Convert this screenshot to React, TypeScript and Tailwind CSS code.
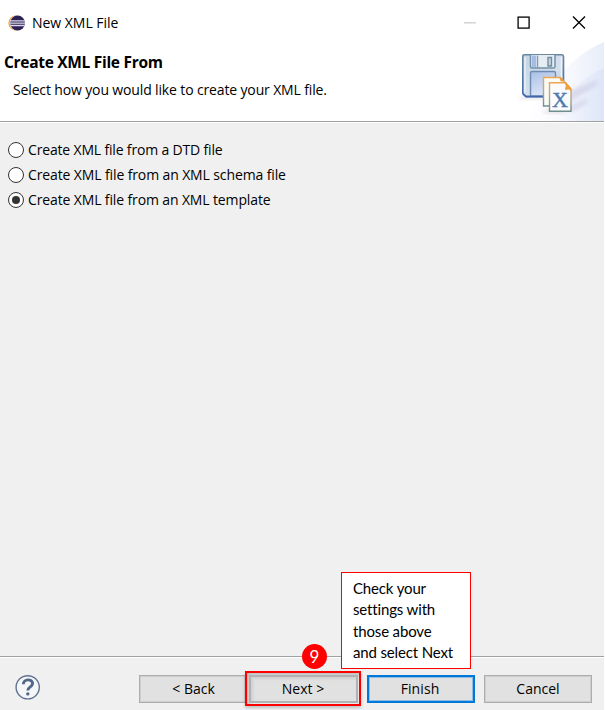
import React from "react";

const UI = "font-['Open_Sans','Noto_Sans',sans-serif]";

function EclipseIcon() {
  return (
    <svg width="18" height="18" viewBox="0 0 18 18" className="block">
      <circle cx="8" cy="9" r="7.6" fill="#f0952a" />
      <circle cx="8.9" cy="9" r="7.5" fill="#fbe3c4" />
      <circle cx="9.6" cy="9" r="7.4" fill="#2c2255" />
      <path d="M2.4 6.9H16.8M2 9.2H17M2.4 11.5H16.8" stroke="#dcdaea" strokeWidth="1.3" />
    </svg>
  );
}

function WizardBanner() {
  return (
    <svg width="104" height="81" viewBox="500 40 104 81" className="block">
      <defs>
        <linearGradient id="swoosh" x1="0" x2="1" y1="0" y2="0">
          <stop offset="0" stopColor="#fff" />
          <stop offset="0.5" stopColor="#fafbfe" />
          <stop offset="1" stopColor="#e8edf9" />
        </linearGradient>
        <linearGradient id="swooshLow" x1="0" x2="1" y1="0" y2="0">
          <stop offset="0" stopColor="#fff" stopOpacity="0" />
          <stop offset="1" stopColor="#dde5f8" />
        </linearGradient>
        <linearGradient id="disk" x1="0" x2="1" y1="0" y2="1">
          <stop offset="0" stopColor="#c5d3e2" />
          <stop offset="0.6" stopColor="#d5e0ee" />
          <stop offset="1" stopColor="#a9bedb" />
        </linearGradient>
        <linearGradient id="label" x1="0" x2="0.4" y1="0" y2="1">
          <stop offset="0" stopColor="#a9bfe6" />
          <stop offset="1" stopColor="#dce6f8" />
        </linearGradient>
        <linearGradient id="edge" x1="0" x2="0" y1="0" y2="1">
          <stop offset="0" stopColor="#6b8aa0" />
          <stop offset="1" stopColor="#4468a8" />
        </linearGradient>
        <linearGradient id="page" x1="0" x2="0" y1="0" y2="1">
          <stop offset="0" stopColor="#f0a44c" />
          <stop offset="0.5" stopColor="#b3a98c" />
          <stop offset="1" stopColor="#6e8d8d" />
        </linearGradient>
        <filter id="soft" x="-30%" y="-60%" width="160%" height="220%">
          <feGaussianBlur stdDeviation="2" />
        </filter>
      </defs>
      <path d="M520 121C545 105 559 60 604 42V121Z" fill="url(#swoosh)" />
      <path d="M530 121C560 119 570 81 604 68V121Z" fill="url(#swooshLow)" />
      <path d="M563 93L596 81L598 84L568 103Z" fill="#b9b4d4" opacity="0.4" filter="url(#soft)" />
      <path d="M568 107L586 99L588 102L572 112Z" fill="#b9b4d4" opacity="0.4" filter="url(#soft)" />
      <path d="M520 96.5H545V99H520Z" fill="#b5a5b5" opacity="0.4" filter="url(#soft)" />
      <path d="M545 110H566V113H543Z" fill="#b5a5b5" opacity="0.4" filter="url(#soft)" />
      <path d="M524 54.8H562Q563.5 54.8 563.5 56.5V96.5H526L522.8 93.5V56Q522.8 54.8 524 54.8Z" fill="url(#disk)" stroke="url(#edge)" strokeWidth="1.6" />
      <path d="M525 57V92M561.3 57V94" stroke="#f0f5fa" strokeWidth="1.2" />
      <path d="M530.5 55V66.5Q530.5 68 532 68H553.5Q555 68 555 66.5V55" fill="#e5edf3" stroke="#7391a7" strokeWidth="1.5" />
      <path d="M532 55.5H536V67H532Z" fill="#a5bce4" />
      <path d="M537.5 55.5V67.5" stroke="#7d9ab2" strokeWidth="1.4" />
      <path d="M548 57.5H551.5V66H548Z" fill="#c8d4e0" stroke="#6f8da3" strokeWidth="1.4" />
      <path d="M530.5 96V73Q530.5 71.5 532 71.5H554Q555.5 71.5 555.5 73V96Z" fill="url(#label)" stroke="#6c8db1" strokeWidth="1.4" />
      <path d="M523 94L526 96.6H544" fill="none" stroke="#3d66ad" strokeWidth="1.6" />
      <path d="M543.5 77.5H560L566 83V106H543.5Z" fill="#fafbf7" stroke="url(#page)" strokeWidth="1.4" />
      <path d="M549.5 82.7H565L571 89V111.3H549.5Z" fill="#f9fbff" stroke="url(#page)" strokeWidth="1.4" />
      <path d="M560 77.5L563.5 81H561ZM565 82.5C567 85 566 87 565.5 89.5C568 88.5 570 89 571.5 90.5C570 87 568 84 565 82.5Z" fill="#f6a23a" stroke="#ee9b38" />
      <text x="552" y="106.8" fontFamily="Liberation Serif" fontSize="21" fill="#4e79ad" stroke="#4e79ad" strokeWidth="0.4" textLength="16" lengthAdjust="spacingAndGlyphs">X</text>
    </svg>
  );
}

function Radio({ label, checked, track }: { label: string; checked?: boolean; track: string }) {
  return (
    <label className="flex h-[25px] items-center">
      <span className="flex size-4 items-center justify-center rounded-full border border-[#333] bg-white">
        {checked && <span className="size-2 rounded-full bg-[#333]" />}
      </span>
      <span className={`ml-1 whitespace-nowrap ${track}`}>{label}</span>
    </label>
  );
}

function Button({ label, className }: { label: string; className: string }) {
  return (
    <button className={`flex h-7 items-center justify-center whitespace-nowrap bg-[#e1e1e1] ${className}`}>
      {label}
    </button>
  );
}

export default function App() {
  return (
    <div className={`relative flex h-[710px] w-[605px] flex-col overflow-hidden border-r border-white bg-[#f0f0f0] text-[14px] leading-5 text-black ${UI}`}>
      <div className="flex h-[121px] shrink-0 justify-between bg-white">
        <div className="flex flex-col">
          <div className="flex h-[46px] items-center pl-2">
            <EclipseIcon />
            <span className="ml-[6px] whitespace-nowrap tracking-[-0.03px]">New XML File</span>
          </div>
          <h1 className="mt-[6px] pl-1 text-[15.5px] font-bold leading-5 tracking-[-0.3px] whitespace-nowrap">Create XML File From</h1>
          <p className="mt-2 pl-[13px] tracking-[-0.14px] whitespace-nowrap">Select how you would like to create your XML file.</p>
        </div>
        <div className="flex w-[141px] flex-col items-end">
          <svg width="141" height="40" viewBox="463 0 141 40" className="block" fill="none">
            <path d="M464 22.8H476" stroke="#d0d0d0" strokeWidth="1.4" />
            <rect x="518.1" y="17.1" width="11" height="11" stroke="#000" strokeWidth="1.3" />
            <path d="M573 16.5L585 28.5M585 16.5L573 28.5" stroke="#000" strokeWidth="1.3" />
          </svg>
          <WizardBanner />
        </div>
      </div>
      <div className="h-[2px] shrink-0 border-t border-[#a0a0a0] bg-white" />

      <div className="flex flex-1 flex-col pl-2 pt-[14px]">
        <Radio label="Create XML file from a DTD file" track="tracking-[-0.17px]" />
        <Radio label="Create XML file from an XML schema file" track="tracking-[-0.12px]" />
        <Radio label="Create XML file from an XML template" track="tracking-[-0.13px]" checked />
      </div>

      <div className="flex h-[54px] shrink-0 items-start border-t border-[#a0a0a0] pl-[15px] pt-[18px] shadow-[inset_0_1px_0_#fff]">
        <svg width="26" height="26" viewBox="0 0 26 26" className="block">
          <circle cx="12.7" cy="12.3" r="11.6" fill="#f5f6f8" stroke="#607391" strokeWidth="1.4" />
          <path d="M8.3 9.2C8.3 3.6 17.6 3.6 17.6 8.6C17.6 12 12.8 11.8 12.8 15.5" fill="none" stroke="#506787" strokeWidth="2.9" />
          <circle cx="12.8" cy="18.9" r="1.7" fill="#506787" />
        </svg>
        <Button label="< Back" className="ml-[98px] w-[106px] border border-r-0 border-[#adadad] pl-[2px] shadow-[inset_0_0_0_1px_#cfcfcf]" />
        <div className="mt-[-4px] flex h-[35px] w-[116px] items-center justify-center border-2 border-[#f00] shadow-[0_2px_3px_rgba(0,0,0,0.2),inset_2px_2px_4px_rgba(0,0,0,0.25)]">
          <Button label="Next >" className="w-[109px] border-2 border-[#b2b2b2] shadow-[inset_2px_2px_3px_rgba(0,0,0,0.08)]" />
        </div>
        <Button label="Finish" className="ml-[6px] w-[108px] border-2 border-[#0078d7] pr-[2px] tracking-[0.1px] shadow-[inset_0_0_0_1px_#8fbde6]" />
        <Button label="Cancel" className="ml-[9px] w-[108px] border border-[#adadad] shadow-[inset_0_0_0_1px_#cfcfcf]" />
      </div>

      <div className="absolute left-[341px] top-[572px] h-[97px] w-[130px] border border-[#f00] bg-white pl-[11px] pt-[5px] font-['Lato',sans-serif] text-[15px] leading-[21.3px] tracking-[-0.15px]">
        Check your<br />settings with<br />those above<br />and select Next
      </div>
      <div className="absolute left-[302px] top-[644px] flex size-[25px] items-center justify-center rounded-full bg-[#f00] font-['Lato',sans-serif] text-[17px] text-white">9</div>
    </div>
  );
}
